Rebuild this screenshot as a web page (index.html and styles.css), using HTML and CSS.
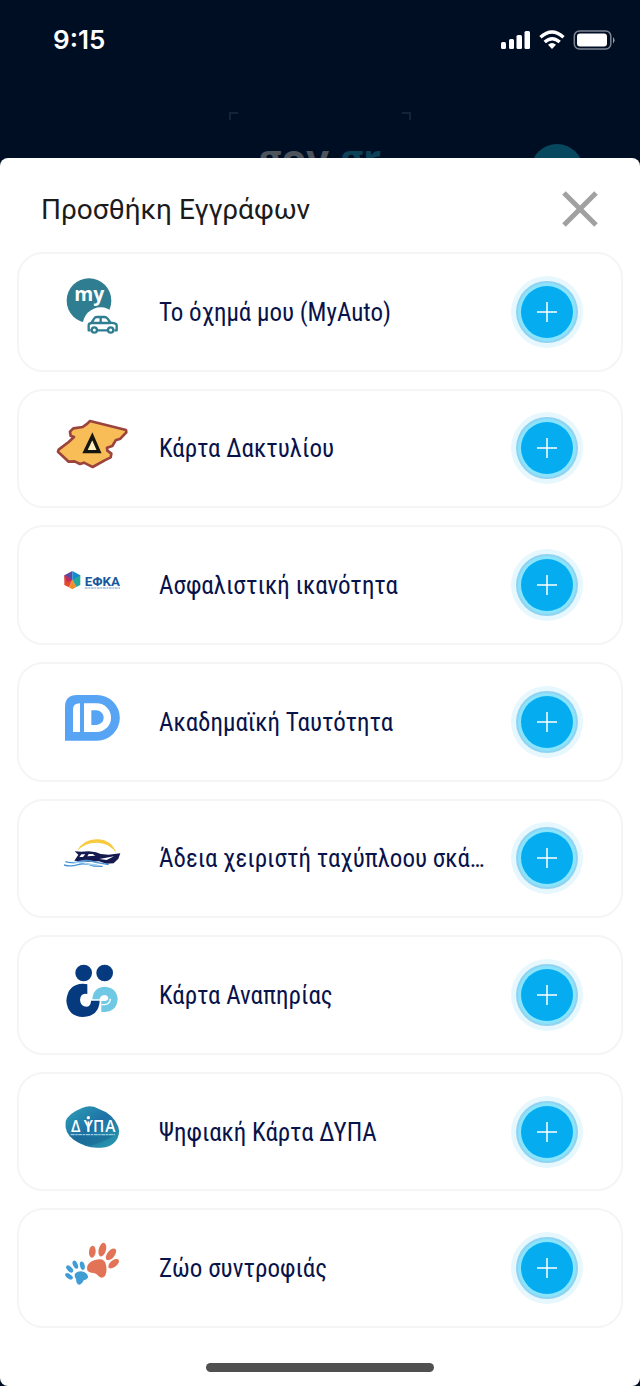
FILE: index.html
```html
<!DOCTYPE html>
<html lang="el">
<head>
<meta charset="utf-8">
<meta name="viewport" content="width=device-width, initial-scale=1">
<title>Προσθήκη Εγγράφων</title>
<link rel="stylesheet" href="styles.css">
</head>
<body>
<div class="screen">
  <header class="backdrop">
    <div class="status">
      <time class="clock">9:15</time>
      <svg class="status-icons" viewBox="0 0 116 22" aria-hidden="true">
        <g fill="#fff">
          <rect x="2" y="13" width="5" height="7" rx="1.5"/><rect x="10" y="10" width="5" height="10" rx="1.5"/><rect x="17.500" y="6" width="5.500" height="14" rx="1.500"/><rect x="25.500" y="2" width="5.500" height="18" rx="1.500"/>
          <path d="M53 20l-4-4.300q4-3.600 8 0z"/>
          <rect x="78" y="4.500" width="30" height="13" rx="3"/>
          <path d="M114 8q3 3 0 6.500z" opacity=".6"/>
        </g>
        <path d="M41.500 8.200q11.500-10.500 23 0M45.700 13q7.500-6.600 15 0" fill="none" stroke="#fff" stroke-width="3.400"/>
        <rect x="75.300" y="2" width="36.500" height="18" rx="5" fill="none" stroke="#7d8593" stroke-width="1.500"/>
      </svg>
    </div>
    <div class="brand">
      <span class="corners"></span>
      <div class="logo">gov<span class="logo-tld">.gr</span></div>
    </div>
    <span class="bubble"></span>
  </header>

  <main class="sheet">
    <div class="sheet-head">
      <h1>Προσθήκη Εγγράφων</h1>
      <button class="close" type="button" aria-label="Κλείσιμο">
        <svg viewBox="0 0 36 36"><path d="M2 2L34 34M34 2L2 34"/></svg>
      </button>
    </div>

    <ul class="cards">
      <li class="card">
        <svg class="icon" viewBox="156 98 240 240" aria-hidden="true">
          <circle cx="267" cy="184" r="67" fill="#2f7d91"/>
          <circle cx="302" cy="258" r="54" fill="#fff"/>
          <text x="268" y="186" text-anchor="middle" font-size="58" font-weight="700" fill="#fff" class="icon-text">my</text>
          <g fill="none" stroke="#2f7d91" stroke-width="7" stroke-linejoin="round">
            <path d="M272 273h-6v-15q0-6 8-7l9-14q2-4 8-4h22q6 0 9 4l10 13 12 2q6 1 6 7v14h-7M293 273h28M274 251h58M302 233v18"/>
            <circle cx="283" cy="272" r="8"/><circle cx="332" cy="272" r="8"/>
          </g>
        </svg>
        <span class="label">Το όχημά μου (MyAuto)</span>
        <button class="add" type="button" aria-label="Προσθήκη: Το όχημά μου"><svg viewBox="0 0 20 20"><path d="M10 0V20M0 10H20"/></svg></button>
      </li>
      <li class="card">
        <svg class="icon" viewBox="36 27 240 240" aria-hidden="true">
          <path d="M150 66l108 27 1 7-18 19-14 5-10 17-16 5 1 9 12 9-2 11-18 9-36 20-16-8-10-5-12 4-16-8-18 1-32-30 2-6 30-23 16-15-10-4-2-12 10-10 28-4 14-10z" fill="#f9bd58" stroke="#9b433d" stroke-width="8" stroke-linejoin="round"/>
          <path d="M157 112l20 46h-42z" fill="#fff1bd" stroke="#17150f" stroke-width="10"/>
        </svg>
        <span class="label">Κάρτα Δακτυλίου</span>
        <button class="add" type="button" aria-label="Προσθήκη: Κάρτα Δακτυλίου"><svg viewBox="0 0 20 20"><path d="M10 0V20M0 10H20"/></svg></button>
      </li>
      <li class="card">
        <svg class="icon" viewBox="36 -43 240 240" aria-hidden="true">
          <path d="M97 35L73 48l2 16 22-2z" fill="#5b4ba0"/><path d="M97 35l24 13-5 18-19-4z" fill="#1789ce"/>
          <path d="M73 48v29l14 7 10-22z" fill="#e34a35"/><path d="M121 48v29l-12 6-12-21z" fill="#21a9a0"/>
          <path d="M87 84l10 6 12-7-12-21z" fill="#f28d29"/><path d="M74 48l23 14-16 6z" fill="#c62863"/>
          <text x="134" y="79" font-size="40" font-weight="700" fill="#17589c" class="icon-text-narrow">ΕΦΚΑ</text>
          <path d="M134 86H241" stroke="#6f97c2" stroke-width="3" stroke-dasharray="9 2 5 2"/>
        </svg>
        <span class="label">Ασφαλιστική ικανότητα</span>
        <button class="add" type="button" aria-label="Προσθήκη: Ασφαλιστική ικανότητα"><svg viewBox="0 0 20 20"><path d="M10 0V20M0 10H20"/></svg></button>
      </li>
      <li class="card">
        <svg class="icon" viewBox="36 6 240 240" aria-hidden="true">
          <path d="M75 182V81q0-36 36-36h60a68 68 0 0 1 0 137z" fill="#58a4f4"/>
          <path d="M99 156V88q0-18 21-18v86z" fill="#fff"/>
          <path d="M132 70h38a43 43 0 0 1 0 86h-38zM154 91v44h15a22 22 0 0 0 0-44z" fill="#fff" fill-rule="evenodd"/>
        </svg>
        <span class="label">Ακαδημαϊκή Ταυτότητα</span>
        <button class="add" type="button" aria-label="Προσθήκη: Ακαδημαϊκή Ταυτότητα"><svg viewBox="0 0 20 20"><path d="M10 0V20M0 10H20"/></svg></button>
      </li>
      <li class="card">
        <svg class="icon" viewBox="36 -19 240 240" aria-hidden="true">
          <path d="M111 79Q132 44 171 45q43 0 58 41-23-31-58-31-34-1-60 24z" fill="#f8ca3e"/>
          <path d="M104 81l20 1 22-1 22 3 14 5 24 2 35-4-6 16-14 14-22 1-22-7-30 1-34-2-10-1 12-18z" fill="#14194f"/>
          <path d="M124 90l12 0-7 8h-11zM146 89l12 0 8 5-24 2zM178 104l44-8-22 11z" fill="#fff"/>
          <path d="M76 112q20 6 42-1 25-6 50 3l38 7M72 122q20 6 42-1t46 4l28 1" fill="none" stroke="#4a92d6" stroke-width="4"/>
          <path d="M98 117q24-7 44 2l30 3" fill="none" stroke="#a4d5f2" stroke-width="4"/>
        </svg>
        <span class="label">Άδεια χειριστή ταχύπλοου σκάφους</span>
        <button class="add" type="button" aria-label="Προσθήκη: Άδεια χειριστή ταχύπλοου σκάφους"><svg viewBox="0 0 20 20"><path d="M10 0V20M0 10H20"/></svg></button>
      </li>
      <li class="card">
        <svg class="icon" viewBox="36 15 240 240" aria-hidden="true">
          <circle cx="131" cy="69" r="25" fill="#053b7e"/><circle cx="194" cy="69" r="25" fill="#053b7e"/>
          <path d="M142 103v29q-20-5-22 18 2 20 20 20 13-2 13-18h26q-2 46-50 49-46-2-50-49 4-50 50-51 7 0 13 2z" fill="#053b7e"/>
          <path d="M157 148q2-36 38-38 36 3 38 38-3 36-38 38h-11v-33h12q9-2 9-9-2-9-12-9-13 2-14 13z" fill="#6fc8e4"/>
          <path d="M184 164h10q17-3 17-18" fill="none" stroke="#fff" stroke-width="4"/>
        </svg>
        <span class="label">Κάρτα Αναπηρίας</span>
        <button class="add" type="button" aria-label="Προσθήκη: Κάρτα Αναπηρίας"><svg viewBox="0 0 20 20"><path d="M10 0V20M0 10H20"/></svg></button>
      </li>
      <li class="card">
        <svg class="icon" viewBox="36 4 240 240" aria-hidden="true">
          <defs><linearGradient id="dypa" x1="0" y1="0" x2="1" y2="1"><stop offset="0" stop-color="#2fa3b7"/><stop offset=".5" stop-color="#1d70a5"/><stop offset="1" stop-color="#2b9eae"/></linearGradient></defs>
          <path d="M77 92q7-23 49-40 25-11 49 2 45 15 60 55 7 22-8 43-18 22-52 19-36 2-74-24-29-20-24-55z" fill="url(#dypa)"/>
          <path d="M88 134q40 6 132 1-35 22-73 31-38-7-59-32z" fill="#17668f" opacity=".55"/>
          <g font-size="46" font-weight="600" fill="#fff" text-anchor="middle" class="icon-text">
            <text x="107 145 176 211" y="125">ΔΥΠΑ</text>
          </g>
          <path d="M145 92v30" stroke="#fff" stroke-width="5"/><circle cx="145" cy="81" r="5" fill="#fff"/>
          <path d="M92 132H225" stroke="#b5dce6" stroke-width="3" stroke-dasharray="12 2 7 2"/>
        </svg>
        <span class="label">Ψηφιακή Κάρτα ΔΥΠΑ</span>
        <button class="add" type="button" aria-label="Προσθήκη: Ψηφιακή Κάρτα ΔΥΠΑ"><svg viewBox="0 0 20 20"><path d="M10 0V20M0 10H20"/></svg></button>
      </li>
      <li class="card">
        <svg class="icon" viewBox="36 9 240 240" aria-hidden="true">
          <g fill="#e27356">
            <path d="M141 128q2-17 24-23 29-9 33 15 4 20-3 33-11 11-22-2-5-8-19-8-14-2-13-15z"/>
            <ellipse cx="157" cy="80" rx="10" ry="18" transform="rotate(5 157 80)"/><ellipse cx="187" cy="74" rx="11" ry="21" transform="rotate(15 187 74)"/>
            <ellipse cx="213" cy="88" rx="11" ry="21" transform="rotate(39 213 88)"/><ellipse cx="221" cy="116" rx="10" ry="19" transform="rotate(51 221 116)"/>
          </g>
          <g fill="#419ed4">
            <path d="M106 145q12-11 28-3 14 8 9 17-3 5-12 7-5 12-13 13-10-1-10-17-7-9-2-17z"/>
            <ellipse cx="87" cy="154" rx="7" ry="13" transform="rotate(-55 87 154)"/><ellipse cx="89" cy="132" rx="7" ry="13" transform="rotate(-45 89 132)"/>
            <ellipse cx="106" cy="119" rx="7" ry="13" transform="rotate(-24 106 119)"/><ellipse cx="127" cy="122" rx="7" ry="13" transform="rotate(-14 127 122)"/>
          </g>
        </svg>
        <span class="label">Ζώο συντροφιάς</span>
        <button class="add" type="button" aria-label="Προσθήκη: Ζώο συντροφιάς"><svg viewBox="0 0 20 20"><path d="M10 0V20M0 10H20"/></svg></button>
      </li>
    </ul>
    <div class="home-bar"></div>
  </main>
</div>
</body>
</html>
```

FILE: styles.css
```css
* {
  box-sizing: border-box;
}

body {
  margin: 0;
  background: #000e24;
  font-family: Roboto, "Noto Sans", sans-serif;
}

.screen {
  display: flex;
  flex-direction: column;
  min-height: 100vh;
}

.backdrop {
  position: relative;
  height: 158px;
  overflow: hidden;
}

.status {
  display: flex;
  justify-content: space-between;
  align-items: center;
  padding: 24px 25px 0 53px;
}

.clock {
  color: #fff;
  font: 600 26px/32px Inter, sans-serif;
}

.status-icons {
  width: 116px;
  height: 22px;
}

.brand {
  display: flex;
  flex-direction: column;
  align-items: center;
  padding-top: 56px;
}

.corners {
  width: 182px;
  height: 8px;
  border: solid #142338;
  border-width: 0 2px;
  background:
    linear-gradient(#142338, #142338) left top / 7px 2px no-repeat,
    linear-gradient(#142338, #142338) right top / 7px 2px no-repeat;
}

.logo {
  padding-top: 14px;
  color: #4e545c;
  font: 700 40px/48px "Open Sans", sans-serif;
}

.logo-tld {
  color: #0b4258;
}

.bubble {
  position: absolute;
  top: 144px;
  right: 57px;
  width: 52px;
  height: 52px;
  border-radius: 50%;
  background: #08485e;
}

.sheet {
  flex: 1;
  display: flex;
  flex-direction: column;
  padding: 0 17px 14px;
  border-radius: 8px;
  background: #fff;
}

.sheet-head {
  display: flex;
  align-items: center;
  justify-content: space-between;
  height: 94px;
  padding: 8px 25px 0 24px;
}

h1 {
  margin: 0;
  padding-top: 2px;
  color: #1b1b1b;
  font-weight: 400;
  font-size: 28px;
  line-height: 36px;
}

.close {
  display: flex;
  padding: 0;
  border: 0;
  background: none;
}

.close svg {
  width: 36px;
  height: 36px;
  fill: none;
  stroke: #a1a1a1;
  stroke-width: 5;
}

.cards {
  flex: 1;
  display: grid;
  grid-auto-rows: 1fr;
  gap: 17px;
  margin: 0;
  padding: 0;
  list-style: none;
}

.card {
  display: flex;
  align-items: center;
  min-width: 0;
  padding: 0 38px 0 33px;
  border: 2px solid #f5f5f5;
  border-radius: 26px;
}

.icon {
  flex: none;
  width: 80px;
  height: 80px;
}

.icon-text {
  font-family: "Open Sans", sans-serif;
}

.icon-text-narrow {
  font-family: Roboto, sans-serif;
}

.label {
  flex: 1;
  min-width: 0;
  margin: 0 20px 0 27px;
  padding-top: 2px;
  overflow: hidden;
  color: #08134a;
  font-family: "Roboto Condensed", "Liberation Sans Narrow", Roboto, sans-serif;
  font-size: 25px;
  line-height: 36px;
  text-overflow: ellipsis;
  white-space: nowrap;
}

.add {
  flex: none;
  display: grid;
  place-items: center;
  width: 52px;
  height: 52px;
  margin: 10px;
  padding: 0;
  border: 0;
  border-radius: 50%;
  background: #05adf0;
  box-shadow: 0 0 0 3px #8ae4fb, 0 0 0 5px #8fd3f1, 0 0 0 10px #e6f7fd;
}

.add svg {
  width: 20px;
  height: 20px;
  fill: none;
  stroke: #fff;
  stroke-width: 1.5;
}

.home-bar {
  width: 228px;
  height: 9px;
  margin: 35px auto 0;
  border-radius: 5px;
  background: #505050;
}
```
